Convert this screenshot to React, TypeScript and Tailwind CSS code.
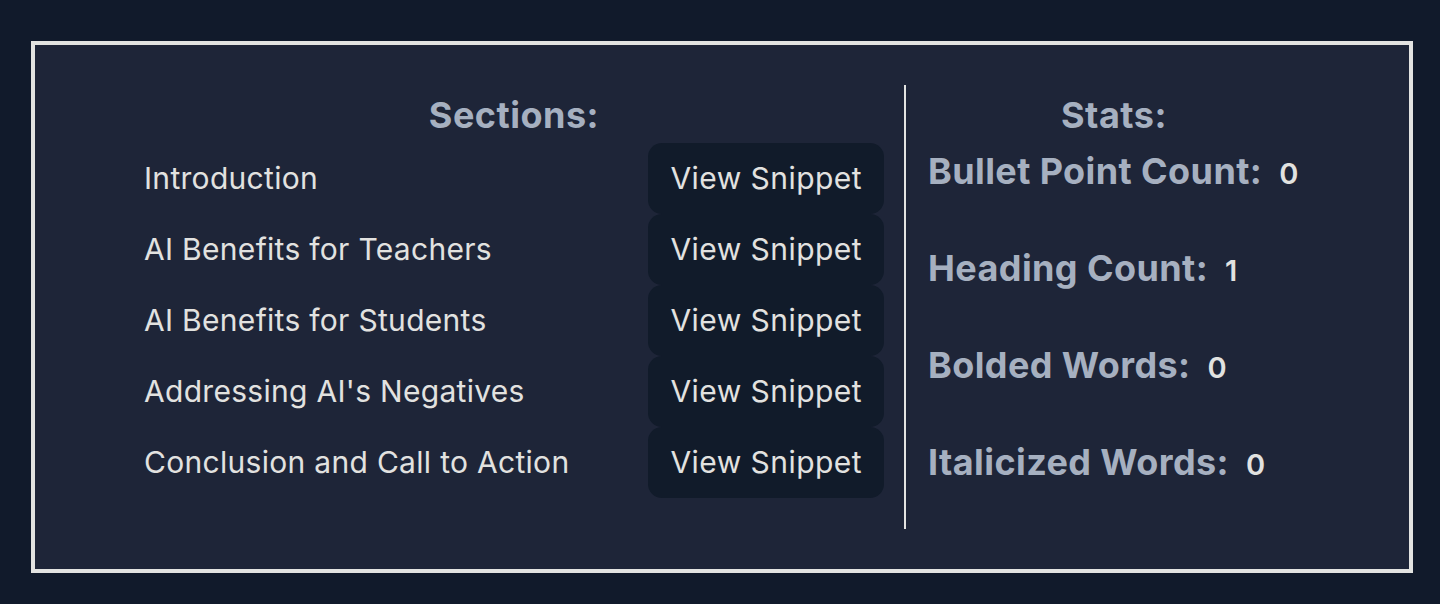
import React from "react";

const sections = [
  "Introduction",
  "AI Benefits for Teachers",
  "AI Benefits for Students",
  "Addressing AI's Negatives",
  "Conclusion and Call to Action",
];

const stats = [
  { label: "Bullet Point Count:", value: "0" },
  { label: "Heading Count:", value: "1" },
  { label: "Bolded Words:", value: "0" },
  { label: "Italicized Words:", value: "0" },
];

export default function App() {
  return (
    <div
      className="min-h-screen w-full bg-[#111a2b] pt-[41px] pl-[31px] pr-[27px] pb-[31px]"
      style={{ fontFamily: "Inter, 'Noto Sans', sans-serif" }}
    >
      <div className="h-[532px] border-4 border-[#e3e3e1] bg-[#1e2538] px-[109px] py-[40px] flex">
        {/* Left column */}
        <div className="w-[740px] shrink-0 pt-[10px] flex flex-col">
          <h2 className="text-center text-[36px] leading-[40px] font-bold tracking-[0.5px] text-[#a6b0c0]">
            Sections:
          </h2>
          <ul className="mt-[8px] flex flex-col">
            {sections.map((s) => (
              <li key={s} className="flex items-center justify-between">
                <span className="whitespace-nowrap text-[30px] leading-[37px] tracking-[0.3px] text-[#e2e2e0]">{s}</span>
                <button className="whitespace-nowrap rounded-[14px] bg-[#111b2a] px-[22px] py-[17px] text-[30px] leading-[37px] tracking-[0.45px] text-[#e2e2e0]">
                  View Snippet
                </button>
              </li>
            ))}
          </ul>
        </div>
        {/* Divider */}
        <div className="ml-[20px] mr-[22px] w-[2px] shrink-0 self-stretch bg-[#e3e3e1]" />
        {/* Right column */}
        <div className="w-[372px] shrink-0 pt-[10px] flex flex-col">
          <h2 className="text-center text-[36px] leading-[40px] font-bold tracking-[0.5px] text-[#a6b0c0]">
            Stats:
          </h2>
          <div className="mt-[16px] flex flex-col gap-[54px]">
            {stats.map((st) => (
              <div key={st.label} className="flex items-baseline gap-[17px] whitespace-nowrap">
                <span className="text-[36px] leading-[40px] font-bold tracking-[0.4px] text-[#a6b0c0]">
                  {st.label}
                </span>
                <span className="text-[29px] leading-[40px] font-semibold text-[#e2e2e0]">
                  {st.value}
                </span>
              </div>
            ))}
          </div>
        </div>
      </div>
    </div>
  );
}
